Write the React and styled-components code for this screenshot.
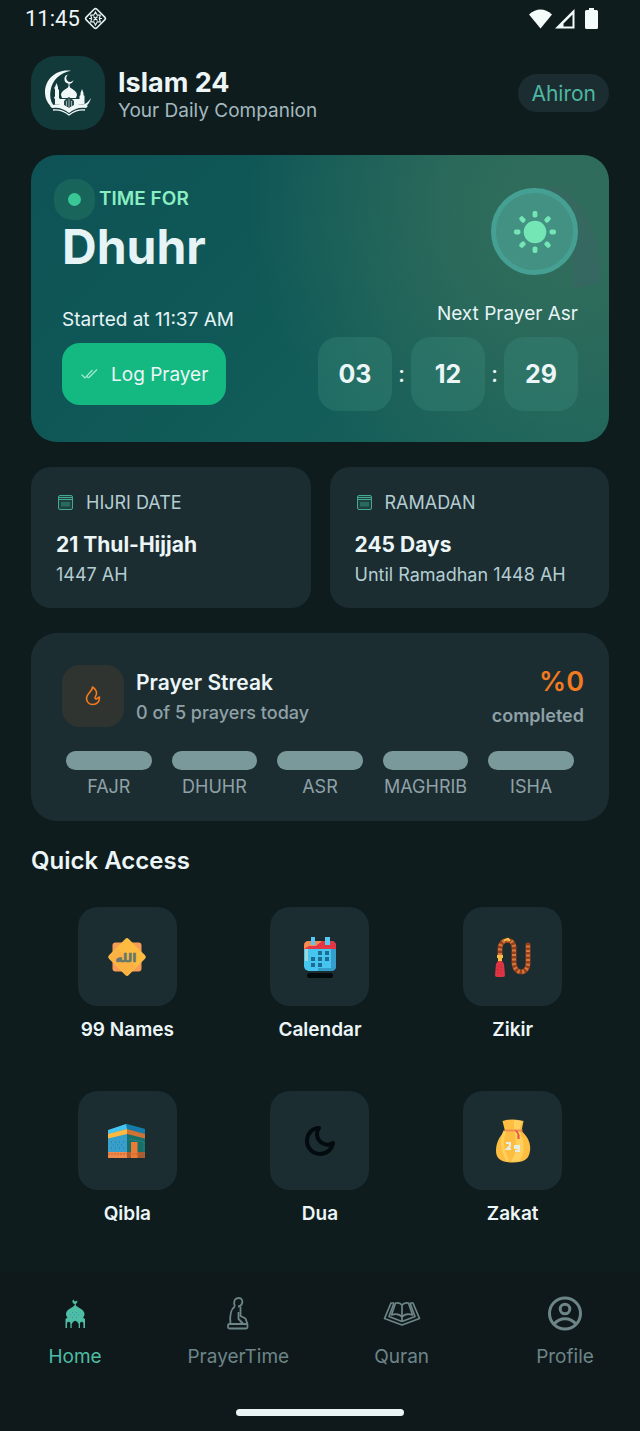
import React from 'react';
import styled, { createGlobalStyle } from 'styled-components';

const GlobalStyle = createGlobalStyle`
  * {
    box-sizing: border-box;
  }

  body {
    margin: 0;
    background: #0f1c1e;
    color: #ecf6f7;
    font-family: Inter, "Liberation Sans", sans-serif;
  }

  h1, h2, h3, p {
    margin: 0;
  }

  button {
    border: 0;
    font-family: inherit;
    cursor: pointer;
  }

  svg {
    display: block;
    flex: none;
  }
`;

const Page = styled.div`
  display: flex;
  flex-direction: column;
  min-height: 100vh;
`;

const StatusBar = styled.div`
  display: flex;
  justify-content: space-between;
  align-items: center;
  height: 37px;
  padding: 0 42px 0 25px;
`;

const StatusGroup = styled.div`
  display: flex;
  align-items: center;
  gap: ${(props) => props.$gap}px;
`;

const Battery = styled.span`
  margin-left: 7px;
`;

const Clock = styled.span`
  font-family: Roboto, sans-serif;
  font-size: 22px;
  line-height: 24px;
`;

const Content = styled.main`
  flex: 1;
  display: flex;
  flex-direction: column;
  gap: 25px;
  padding: 19px 31px 46px;
`;

const Header = styled.header`
  display: flex;
  align-items: center;
  gap: 13px;
`;

const Logo = styled.div`
  display: grid;
  place-items: center;
  width: 74px;
  height: 74px;
  border-radius: 25px;
  background: #133a3b;
`;

const Brand = styled.div`
  padding-top: 4px;
`;

const AppName = styled.h1`
  font-size: 27px;
  line-height: 32px;
  font-weight: 700;
`;

const Tagline = styled.p`
  font-size: 19px;
  line-height: 24px;
  color: #a3b9bf;
`;

const CityButton = styled.button`
  margin-left: auto;
  padding: 0 13px;
  height: 38px;
  border-radius: 19px;
  background: #1c2d32;
  color: #4db8a0;
  font-size: 21px;
`;

const Hero = styled.section`
  position: relative;
  display: flex;
  flex-direction: column;
  gap: 27px;
  padding: 32px 31px 31px;
  border-radius: 26px;
  background:
    radial-gradient(circle at 92% 18%, #316d5b 0%, rgba(49, 109, 91, 0.8) 20%, rgba(49, 109, 91, 0) 54%),
    linear-gradient(135deg, #0e5255 0%, #105a58 50%, #1c645c 100%);
`;

const HeroRow = styled.div`
  position: relative;
  display: flex;
  justify-content: space-between;
  align-items: ${(props) => props.$align};
`;

const Glow = styled.svg`
  position: absolute;
  top: 30px;
  right: 8px;
`;

const TimeFor = styled.p`
  display: flex;
  align-items: center;
  gap: 12px;
  margin-bottom: 8px;
  font-size: 19px;
  line-height: 24px;
  font-weight: 600;
  color: #8aeec2;
`;

const DotSlot = styled.span`
  display: grid;
  place-items: center;
  width: 25px;
  height: 24px;
`;

const Dot = styled.span`
  width: 13px;
  height: 13px;
  border-radius: 50%;
  background: #38c795;
  box-shadow: 0 0 0 14px rgba(56, 150, 110, 0.25);
`;

const PrayerName = styled.h2`
  font-size: 48px;
  line-height: 56px;
  font-weight: 700;
  color: #e6f4f6;
`;

const SunBadge = styled.div`
  display: grid;
  place-items: center;
  width: 87px;
  height: 87px;
  border: 5px solid #459f92;
  border-radius: 50%;
  background: #429182;
`;

const HeroColumn = styled.div`
  display: flex;
  flex-direction: column;
  align-items: ${(props) => props.$align};
  gap: 11px;
`;

const HeroNote = styled.p`
  font-size: 19px;
  line-height: 24px;
  color: #e6f4f6;
`;

const LogButton = styled.button`
  display: flex;
  align-items: center;
  gap: 12px;
  height: 62px;
  padding: 0 18px;
  border-radius: 18px;
  background: #14b881;
  color: #ecf6f7;
  font-size: 19px;
`;

const Countdown = styled.div`
  display: flex;
  align-items: center;
`;

const TimeBox = styled.span`
  display: grid;
  place-items: center;
  width: 74px;
  height: 74px;
  border-radius: 20px;
  background: rgba(60, 142, 126, 0.33);
  font-size: 25px;
  font-weight: 700;
`;

const Colon = styled.span`
  width: 19px;
  text-align: center;
  font-size: 22px;
  font-weight: 500;
`;

const InfoGrid = styled.div`
  display: grid;
  grid-template-columns: 1fr 1fr;
  gap: 19px;
`;

const InfoCard = styled.section`
  padding: 24px 25px 21px;
  border-radius: 20px;
  background: #1c2d32;
`;

const InfoLabel = styled.p`
  display: flex;
  align-items: center;
  gap: 12px;
  margin-bottom: 15px;
  font-size: 18px;
  line-height: 24px;
  color: #b4cdd2;
`;

const InfoTitle = styled.h3`
  margin-bottom: 3px;
  font-size: 21px;
  line-height: 30px;
  font-weight: 700;
`;

const InfoText = styled.p`
  font-size: 18px;
  line-height: 24px;
  color: #b4cdd2;
`;

const StreakCard = styled.section`
  padding: 31px 25px 22px;
  border-radius: 26px;
  background: #1c2d32;
`;

const StreakTop = styled.div`
  display: flex;
  align-items: center;
  gap: 12px;
  margin-bottom: 23px;
  padding-left: 6px;
`;

const FlameBox = styled.div`
  display: grid;
  place-items: center;
  width: 62px;
  height: 62px;
  border-radius: 18px;
  background: #303430;
`;

const StreakInfo = styled.div`
  padding-top: 4px;
`;

const StreakTitle = styled.h3`
  font-size: 21px;
  line-height: 30px;
  font-weight: 600;
`;

const StreakText = styled.p`
  font-size: 18px;
  line-height: 30px;
  font-weight: 500;
  color: #8fa1a7;
`;

const Score = styled.div`
  margin-left: auto;
  text-align: right;
`;

const Percent = styled.p`
  margin-bottom: 4px;
  font-size: 27px;
  line-height: 36px;
  font-weight: 600;
  color: #f27a1f;
`;

const Completed = styled.p`
  font-size: 18px;
  line-height: 24px;
  font-weight: 600;
  color: #8fa1a7;
`;

const PrayerList = styled.ul`
  display: grid;
  grid-template-columns: repeat(5, 1fr);
  margin: 0;
  padding: 0;
  list-style: none;
`;

const PrayerItem = styled.li`
  display: flex;
  flex-direction: column;
  gap: 5px;
  padding: 0 10px;
  font-size: 18px;
  line-height: 24px;
  text-align: center;
  color: #8fa1a7;

  &::before {
    content: "";
    height: 19px;
    border-radius: 10px;
    background: #7a999b;
  }
`;

const SectionTitle = styled.h2`
  margin-bottom: 31px;
  font-size: 24px;
  line-height: 30px;
  font-weight: 600;
`;

const QuickGrid = styled.div`
  display: grid;
  grid-template-columns: repeat(3, 1fr);
  row-gap: 49px;
`;

const QuickItem = styled.a`
  display: flex;
  flex-direction: column;
  align-items: center;
  gap: 12px;
  font-size: 19px;
  line-height: 24px;
  font-weight: 600;
  color: #ecf6f7;
  text-decoration: none;
`;

const Tile = styled.span`
  display: grid;
  place-items: center;
  width: 99px;
  height: 99px;
  border-radius: 20px;
  background: #1c2d32;
`;

const Footer = styled.footer`
  padding: 23px 23px 15px;
  background: #0f191c;
`;

const Nav = styled.nav`
  display: flex;
  justify-content: space-between;
  margin-bottom: 40px;
`;

const NavLink = styled.a`
  display: flex;
  flex-direction: column;
  align-items: center;
  gap: 12px;
  width: 104px;
  font-size: 19px;
  line-height: 24px;
  color: ${(props) => (props.$active ? '#4dbda3' : '#6d8587')};
  text-decoration: none;
`;

const HomeIndicator = styled.div`
  width: 168px;
  height: 7px;
  margin: 0 auto;
  border-radius: 4px;
  background: #e9f4f3;
`;

const DiamondIcon = () => (
  <svg width="23" height="23" viewBox="0 0 23 23" fill="none" stroke="#e4efef">
    <rect x="4" y="4" width="15" height="15" rx="2" strokeWidth="1.6" transform="rotate(45 11.5 11.5)" />
    <path d="M11.5 5l1.800 3.200h3l-1 3.300 1 3.300h-3L11.5 18l-1.800-3.200h-3l1-3.300-1-3.300h3z" strokeWidth="1.200" />
    <path d="M5 11.500h3M15 11.500h3M9.500 9.500l4 4M13.500 9.500l-4 4" strokeWidth="1.200" />
  </svg>
);

const WifiIcon = () => (
  <svg width="23" height="20" viewBox="0 0 23 20">
    <path d="M0 5.500Q11.500-4.500 23 5.500L11.500 19.500Z" fill="#f4fbfb" />
  </svg>
);

const SignalIcon = () => (
  <svg width="20" height="20" viewBox="0 0 20 20">
    <path d="M0 19.500L19.500 0V19.500ZM8.500 17.500H17.500V5.500L8.500 14.500Z" fill="#f4fbfb" fillRule="evenodd" />
  </svg>
);

const BatteryIcon = () => (
  <svg width="13" height="21" viewBox="0 0 13 21">
    <path d="M4 0h5v2h2.500Q13 2 13 3.500V19.500Q13 21 11.500 21h-10Q0 21 0 19.500v-16Q0 2 1.500 2H4Z" fill="#f4fbfb" />
  </svg>
);

const LogoArt = () => (
  <svg width="48" height="46" viewBox="0 0 48 46" fill="#f1f8f8">
    <path d="M27 .8C13-1.500 1 9 1 22c0 7 3 12.500 8 16l2-1C7 33 5.500 28 6.500 21 8 10 16 3 27 .8Z" />
    <path d="M24.500 4.500A4.600 4.600 0 1 0 29.500 10 3.900 3.900 0 1 1 24.500 4.500Z" />
    <path d="M25 12.500v5" stroke="#f1f8f8" strokeWidth="1" />
    <path d="M25 16c-1 3-8 4-8 9l1 3h14l1-3c0-5-7-6-8-9Z" />
    <path d="M11 17l1.500-4 1.500 4v2l1 1v8l2 2v4h-6v-5l-1-1 1-2v-7l-1-1Z" />
    <path d="M36.500 23l1.500-4 1.500 4v2l1 1v8h-5v-8l1-1Z" />
    <path d="M14 29h22v5l-11 5-11-5Z" />
    <path d="M20 35v-4l2-2 3-2 3 2 2 2v4l-5 3Z" fill="#284b4d" />
    <path d="M25 29v8M22.500 31v5M27.500 31v5" stroke="#c5d6d6" strokeWidth=".7" />
    <path d="M6 36c7-3 13-2 19 2 6-4 12-5 19-2l-2 2c-7-1-12 1-17 5-5-4-10-6-17-5Z" />
    <path d="M9 40c7-1 11 1 16 5 5-4 9-6 16-5" fill="none" stroke="#f1f8f8" strokeWidth="1.300" />
    <path d="M47 28c-1 4-3 7-6 9l-3-2c4-1 6-3 9-7Z" />
  </svg>
);

const SunIcon = () => (
  <svg width="44" height="44" viewBox="0 0 44 44">
    <circle cx="22" cy="22" r="11.300" fill="#74e6b6" />
    {[0, 45, 90, 135, 180, 225, 270, 315].map((angle) => (
      <rect key={angle} x="19.600" y="1" width="4.800" height="6.500" rx="1.800" fill="#74e6b6" transform={`rotate(${angle} 22 22)`} />
    ))}
  </svg>
);

const DoubleCheckIcon = () => (
  <svg width="19" height="20" viewBox="0 0 19 20" fill="none" stroke="#a8ecd5" strokeWidth="1.100">
    <path d="M1.500 10.500L5 14l7.500-8M8.500 14l8.500-8.500" />
    <path d="M7 12.500L8.500 14" />
  </svg>
);

const CalendarLineIcon = () => (
  <svg width="18" height="18" viewBox="0 0 18 18" fill="none" stroke="#43a992" strokeWidth="1">
    <rect x="2.500" y="1.500" width="14" height="14" rx="1.500" fill="#20403f" />
    <path d="M2.500 3.500h14M2.500 5.500h14" />
    <path d="M5 8h9v2.500H5ZM5 10.500h9v2H5Z" fill="#296a60" stroke="none" />
  </svg>
);

const FlameIcon = () => (
  <svg width="20" height="22" viewBox="0 0 20 22" fill="none" stroke="#f5791d" strokeWidth="1.600" strokeLinejoin="round">
    <path d="M9.500 2C10 6 3.500 8 3.500 13.500A6 6 0 0 0 9.500 19.500c4 0 7-2.500 7-7.500-1.500.2-2 1.500-3 2-1.200.3-2-1-1-2.500C15 8 13 4 9.500 2Z" />
  </svg>
);

const NamesIcon = () => (
  <svg width="40" height="40" viewBox="0 0 40 40">
    <rect x="5.500" y="5.500" width="29" height="29" rx="3" fill="#f79b55" />
    <rect x="6" y="6" width="28" height="28" rx="2.500" fill="#fdbb41" transform="rotate(45 20 20)" />
    <path d="M1.500 20L20 38.500 29 29.500 11 11Z" fill="#f8a449" opacity=".35" />
    <text x="19" y="25" textAnchor="middle" fontFamily="DejaVu Sans, sans-serif" fontSize="12" fontWeight="700" fill="#66776c" stroke="#66776c" strokeWidth=".6">الله</text>
  </svg>
);

const CalendarIcon = () => (
  <svg width="36" height="42" viewBox="0 0 36 42">
    <rect x="5" y="37" width="26" height="5" rx="2.500" fill="#030b0e" />
    <rect x="2" y="5" width="32" height="30" rx="5" fill="#45c5ef" />
    <path d="M34 13v17q0 5-5 5H16v-3h13V13Z" fill="#359ecb" />
    <path d="M2 13V10q0-5 5-5h22q5 0 5 5v3Z" fill="#e53645" />
    <path d="M2 13v-3q0-5 5-5h13l-6 5H7Z" fill="#f58b52" />
    <path d="M3 13h3v12H3Z" fill="#9cd9d6" />
    <path d="M9 1h4v8H9ZM23 1h5v8h-5Z" fill="#57c8f2" />
    <path d="M16 15h4v4h-4ZM23 15h4v4h-4ZM9 21h4v4H9ZM16 21h4v4h-4ZM23 21h4v4h-4ZM9 27h4v4H9ZM16 27h4v4h-4Z" fill="#1b6c93" />
  </svg>
);

const BeadsIcon = () => (
  <svg width="40" height="40" viewBox="0 0 40 40" fill="none">
    <path d="M7 18V12C7 1 21 0 21 11V25C21 38 35 38 35 26V8" stroke="#96411d" strokeWidth="5" strokeLinecap="round" />
    <path d="M7 18V12C7 1 21 0 21 11V25C21 38 35 38 35 26V8" stroke="#d8793b" strokeWidth="4" strokeDasharray="2 2.500" />
    <path d="M11 3.500l4-1.500 2 2" stroke="#f4bd4c" strokeWidth="2" />
    <path d="M4 18h6v3H9v3H5v-3H4Z" fill="#f9bc48" />
    <path d="M5 24h4l2 3 1 11q0 2-2 2H4q-2 0-2-2l1-11Z" fill="#df3442" />
    <path d="M5 29v9M8 27v10" stroke="#a62b39" strokeDasharray="1 2" />
  </svg>
);

const KaabaIcon = () => (
  <svg width="40" height="38" viewBox="0 0 40 38">
    <path d="M1 9L20 2v34H1Z" fill="#389fca" />
    <path d="M20 2l18 5v29H20Z" fill="#166f68" />
    <path d="M1 8L19 2l1 5L1 12Z" fill="#45c5ef" />
    <path d="M19 2l19 5v5L20 7Z" fill="#147cac" />
    <path d="M1 12l19-5v5L1 16.500Z" fill="#fdb93f" />
    <path d="M20 7l18 5v4.500L20 12Z" fill="#ce7336" />
    <path d="M4 20h14M6 23h12M4 26h13" stroke="#1f759e" strokeDasharray="1 3" />
    <path d="M22 17l15 3v9" fill="none" stroke="#389386" strokeDasharray="1 1" />
    <rect x="1" y="30" width="19" height="6" fill="#f1894b" />
    <rect x="20" y="30" width="18" height="6" fill="#a85d31" />
    <path d="M24 20h6.500v16H24Z" fill="#ec7b35" />
    <path d="M1 32h37" stroke="#bf6535" strokeDasharray="2 1" />
  </svg>
);

const DuaMoonIcon = () => (
  <svg width="32" height="32" viewBox="0 0 32 32" fill="none" stroke="#030b0e" strokeWidth="4" strokeLinejoin="round">
    <path d="M15 3C8 3 3 9 3 16a13 13 0 0 0 13 13c7 0 12-5 13-11-6 4-15 0-16-8 0-3 0-5 2-7Z" />
  </svg>
);

const BagIcon = () => (
  <svg width="36" height="44" viewBox="0 0 36 44">
    <path d="M7.500 2Q18-1 28.500 2L26.500 12C33 18 36 24 35 32 34 40 29 43.500 18 43.500S1 40 1 32C1 24 4 18 10 12Z" fill="#fdbd41" />
    <path d="M19 1l8 1-3 10c6 10 6 21 1 30l-9 1c6-10 6-20 3-31Z" fill="#ffd766" opacity=".75" />
    <path d="M10 12C6 20 7 31 13 42" fill="none" stroke="#fed05a" strokeWidth="3" />
    <path d="M9.500 11.500h18" stroke="#f38c51" strokeWidth="2" />
    <path d="M19.500 11l3 4v5h2v-4l-2-4Z" fill="#e84b43" />
    <path d="M11 24h4v3l-3 3h4M19 27h5v5h-4" fill="none" stroke="#e4eee5" strokeWidth="2" />
    <path d="M19 26h5v4h-5Z" fill="#e4eee5" />
  </svg>
);

const MosqueIcon = () => (
  <svg width="38" height="38" viewBox="0 0 38 38" fill="currentColor">
    <path d="M17.300 4.500A2.500 2.500 0 1 0 21.200 5.500a2.300 2.300 0 0 1-3.900-1Z" />
    <path d="M18.700 7.500h1v3.500h-1Z" />
    <path d="M19.200 9.500C18 12.500 10 14 10 19c0 1.500.6 2.500 1.500 3.500L9.500 24v9H11v-4.500a1.700 1.700 0 0 1 3.400 0V33h1.300v-4l1.500-2.200 2-1 2 1 1.500 2.200v4H24v-4.500a1.700 1.700 0 0 1 3.400 0V33H29v-9l-2-1.500c.9-1 1.500-2 1.500-3.500 0-5-8.100-6.500-9.300-9.500Z" />
    <path d="M16 17.500h6M14 20h10M16 22.500h6" stroke="#3590ba" strokeDasharray="1 3" />
  </svg>
);

const PrayingIcon = () => (
  <svg width="38" height="38" viewBox="0 0 38 38" fill="none" stroke="currentColor" strokeWidth="1.800" strokeLinejoin="round">
    <path d="M15.800 11.500C14 6 16 3 19.500 3S24.200 6 22.800 9c-.8 1.800-2 2.500-3.800 2.500" />
    <path d="M15.800 11.500C12 14 10.500 20 11.500 29h8l4-1-4-4V17" />
    <path d="M21.500 12v9l5 2.500 2 5.500H19" />
    <rect x="9" y="29" width="19.500" height="4.500" rx="1.500" />
  </svg>
);

const QuranIcon = () => (
  <svg width="38" height="38" viewBox="0 0 38 38" fill="none" stroke="currentColor" strokeWidth="1.700" strokeLinejoin="round">
    <path d="M11 8H8L1.500 23.500 19 30l17.500-6.500L30 8h-3" />
    <path d="M11 8L6 21.500 19 26.500l13-5L27 8" />
    <path d="M19 10c-1.500-2-4-2.500-6.500-2L8.500 20c4-1.500 8-1 10.500 2 2.500-3 6.500-3.500 10.500-2L25.500 8c-2.500-.5-5 0-6.500 2v16" />
  </svg>
);

const ProfileIcon = () => (
  <svg width="38" height="38" viewBox="0 0 38 38" fill="none" stroke="currentColor" strokeWidth="3">
    <circle cx="19" cy="18.500" r="15.500" />
    <circle cx="19" cy="14" r="4.800" />
    <path d="M8 29C14 22 24 22 30 29" />
  </svg>
);

const prayers = ['FAJR', 'DHUHR', 'ASR', 'MAGHRIB', 'ISHA'];

const quickLinks = [
  { label: '99 Names', Icon: NamesIcon },
  { label: 'Calendar', Icon: CalendarIcon },
  { label: 'Zikir', Icon: BeadsIcon },
  { label: 'Qibla', Icon: KaabaIcon },
  { label: 'Dua', Icon: DuaMoonIcon },
  { label: 'Zakat', Icon: BagIcon },
];

const navLinks = [
  { label: 'Home', Icon: MosqueIcon, active: true },
  { label: 'PrayerTime', Icon: PrayingIcon },
  { label: 'Quran', Icon: QuranIcon },
  { label: 'Profile', Icon: ProfileIcon },
];

const App = () => {
  return (
    <Page>
      <GlobalStyle />
      <StatusBar>
        <StatusGroup $gap={4}>
          <Clock>11:45</Clock>
          <DiamondIcon />
        </StatusGroup>
        <StatusGroup $gap={3}>
          <WifiIcon />
          <SignalIcon />
          <Battery>
            <BatteryIcon />
          </Battery>
        </StatusGroup>
      </StatusBar>

      <Content>
        <Header>
          <Logo>
            <LogoArt />
          </Logo>
          <Brand>
            <AppName>Islam 24</AppName>
            <Tagline>Your Daily Companion</Tagline>
          </Brand>
          <CityButton type="button">Ahiron</CityButton>
        </Header>

        <Hero>
          <Glow width="62" height="108" viewBox="0 0 62 108">
            <path d="M8 1C38 3 62 40 62 98L34 104V60Z" fill="#41606a" opacity=".35" />
          </Glow>
          <HeroRow $align="flex-end">
            <div>
              <TimeFor>
                <DotSlot>
                  <Dot />
                </DotSlot>
                TIME FOR
              </TimeFor>
              <PrayerName>Dhuhr</PrayerName>
            </div>
            <SunBadge>
              <SunIcon />
            </SunBadge>
          </HeroRow>
          <HeroRow $align="center">
            <HeroColumn $align="flex-start">
              <HeroNote>Started at 11:37 AM</HeroNote>
              <LogButton type="button">
                <DoubleCheckIcon />
                Log Prayer
              </LogButton>
            </HeroColumn>
            <HeroColumn $align="flex-end">
              <HeroNote>Next Prayer Asr</HeroNote>
              <Countdown>
                <TimeBox>03</TimeBox>
                <Colon>:</Colon>
                <TimeBox>12</TimeBox>
                <Colon>:</Colon>
                <TimeBox>29</TimeBox>
              </Countdown>
            </HeroColumn>
          </HeroRow>
        </Hero>

        <InfoGrid>
          <InfoCard>
            <InfoLabel>
              <CalendarLineIcon />
              HIJRI DATE
            </InfoLabel>
            <InfoTitle>21 Thul-Hijjah</InfoTitle>
            <InfoText>1447 AH</InfoText>
          </InfoCard>
          <InfoCard>
            <InfoLabel>
              <CalendarLineIcon />
              RAMADAN
            </InfoLabel>
            <InfoTitle>245 Days</InfoTitle>
            <InfoText>Until Ramadhan 1448 AH</InfoText>
          </InfoCard>
        </InfoGrid>

        <StreakCard>
          <StreakTop>
            <FlameBox>
              <FlameIcon />
            </FlameBox>
            <StreakInfo>
              <StreakTitle>Prayer Streak</StreakTitle>
              <StreakText>0 of 5 prayers today</StreakText>
            </StreakInfo>
            <Score>
              <Percent>%0</Percent>
              <Completed>completed</Completed>
            </Score>
          </StreakTop>
          <PrayerList>
            {prayers.map((prayer) => (
              <PrayerItem key={prayer}>{prayer}</PrayerItem>
            ))}
          </PrayerList>
        </StreakCard>

        <section>
          <SectionTitle>Quick Access</SectionTitle>
          <QuickGrid>
            {quickLinks.map(({ label, Icon }) => (
              <QuickItem key={label} href="#">
                <Tile>
                  <Icon />
                </Tile>
                {label}
              </QuickItem>
            ))}
          </QuickGrid>
        </section>
      </Content>

      <Footer>
        <Nav>
          {navLinks.map(({ label, Icon, active }) => (
            <NavLink key={label} href="#" $active={active}>
              <Icon />
              {label}
            </NavLink>
          ))}
        </Nav>
        <HomeIndicator />
      </Footer>
    </Page>
  );
};

export default App;
